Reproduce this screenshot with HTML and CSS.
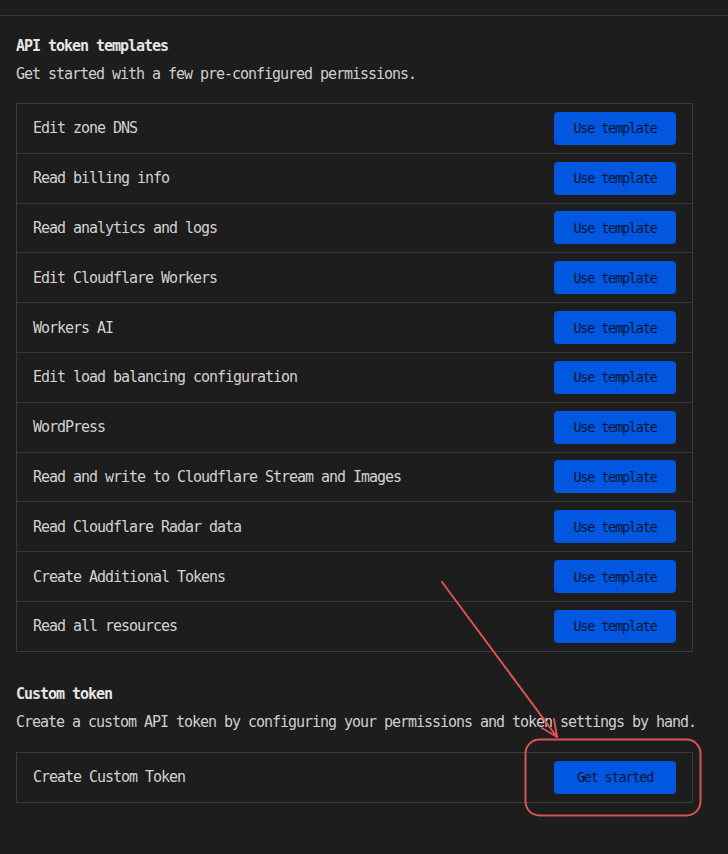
FILE: index.html
```html
<!DOCTYPE html>
<html lang="en">
<head>
<meta charset="utf-8">
<title>API Tokens</title>
<link rel="stylesheet" href="styles.css">
</head>
<body>
<div class="topbar"></div>
<main class="content">
  <section class="section">
    <h2 class="title">API token templates</h2>
    <p class="desc">Get started with a few pre-configured permissions.</p>
    <div class="list">
      <div class="row"><span class="label">Edit zone DNS</span><button class="btn">Use template</button></div>
      <div class="row"><span class="label">Read billing info</span><button class="btn">Use template</button></div>
      <div class="row"><span class="label">Read analytics and logs</span><button class="btn">Use template</button></div>
      <div class="row"><span class="label">Edit Cloudflare Workers</span><button class="btn">Use template</button></div>
      <div class="row"><span class="label">Workers AI</span><button class="btn">Use template</button></div>
      <div class="row"><span class="label">Edit load balancing configuration</span><button class="btn">Use template</button></div>
      <div class="row"><span class="label">WordPress</span><button class="btn">Use template</button></div>
      <div class="row"><span class="label">Read and write to Cloudflare Stream and Images</span><button class="btn">Use template</button></div>
      <div class="row"><span class="label">Read Cloudflare Radar data</span><button class="btn">Use template</button></div>
      <div class="row"><span class="label">Create Additional Tokens</span><button class="btn">Use template</button></div>
      <div class="row"><span class="label">Read all resources</span><button class="btn">Use template</button></div>
    </div>
  </section>
  <section class="section custom">
    <h2 class="title">Custom token</h2>
    <p class="desc">Create a custom API token by configuring your permissions and token settings by hand.</p>
    <div class="list">
      <div class="row"><span class="label">Create Custom Token</span><button class="btn">Get started</button></div>
    </div>
  </section>
</main>
<svg class="annotation" width="728" height="854" viewBox="0 0 728 854" aria-hidden="true">
  <line x1="442" y1="582" x2="557" y2="737" />
  <polyline points="542,728 557,737 554,719" />
  <rect x="525.5" y="739.5" width="175" height="76" rx="14" ry="14" />
</svg>
</body>
</html>
```
FILE: styles.css
```css
* { box-sizing: border-box; }
html, body { margin: 0; padding: 0; }
body {
  position: relative;
  width: 728px;
  height: 854px;
  overflow: hidden;
  background: #1d1d1d;
  color: #d2d2d2;
  font-family: "DejaVu Sans Mono", "Liberation Mono", monospace;
  font-size: 15px;
  letter-spacing: -1.03px;
}
.topbar {
  height: 16px;
  border-bottom: 1px solid #363636;
}
.content {
  padding: 0 35px 0 16px;
}
.section { margin-top: 20px; }
.section.custom { margin-top: 32px; }
.title {
  margin: 0;
  font-size: 15px;
  line-height: 20px;
  font-weight: 600;
  color: #e4e4e4;
}
.desc {
  margin: 8px 0 0;
  line-height: 20px;
  color: #cfcfcf;
  white-space: nowrap;
}
.list {
  margin-top: 19px;
  border: 1px solid #3a3a3a;
}
.custom .list { margin-top: 20px; }
.row {
  display: flex;
  align-items: center;
  justify-content: space-between;
  height: 49.8px;
  padding: 0 16px 0 16px;
  border-top: 1px solid #363636;
}
.row:first-child { border-top: none; height: 48.8px; }
.label { line-height: 20px; }
.btn {
  width: 122px;
  height: 33px;
  border: none;
  border-radius: 4px;
  background: #0157e0;
  color: #061634;
  font-family: "DejaVu Sans Mono", "Liberation Mono", monospace;
  font-size: 13.5px;
  letter-spacing: -1.2px;
  padding: 0;
}
.annotation {
  position: absolute;
  left: 0;
  top: 0;
  pointer-events: none;
  fill: none;
  stroke: #dc5450;
  stroke-width: 2;
  stroke-linecap: round;
  stroke-linejoin: round;
}
```
